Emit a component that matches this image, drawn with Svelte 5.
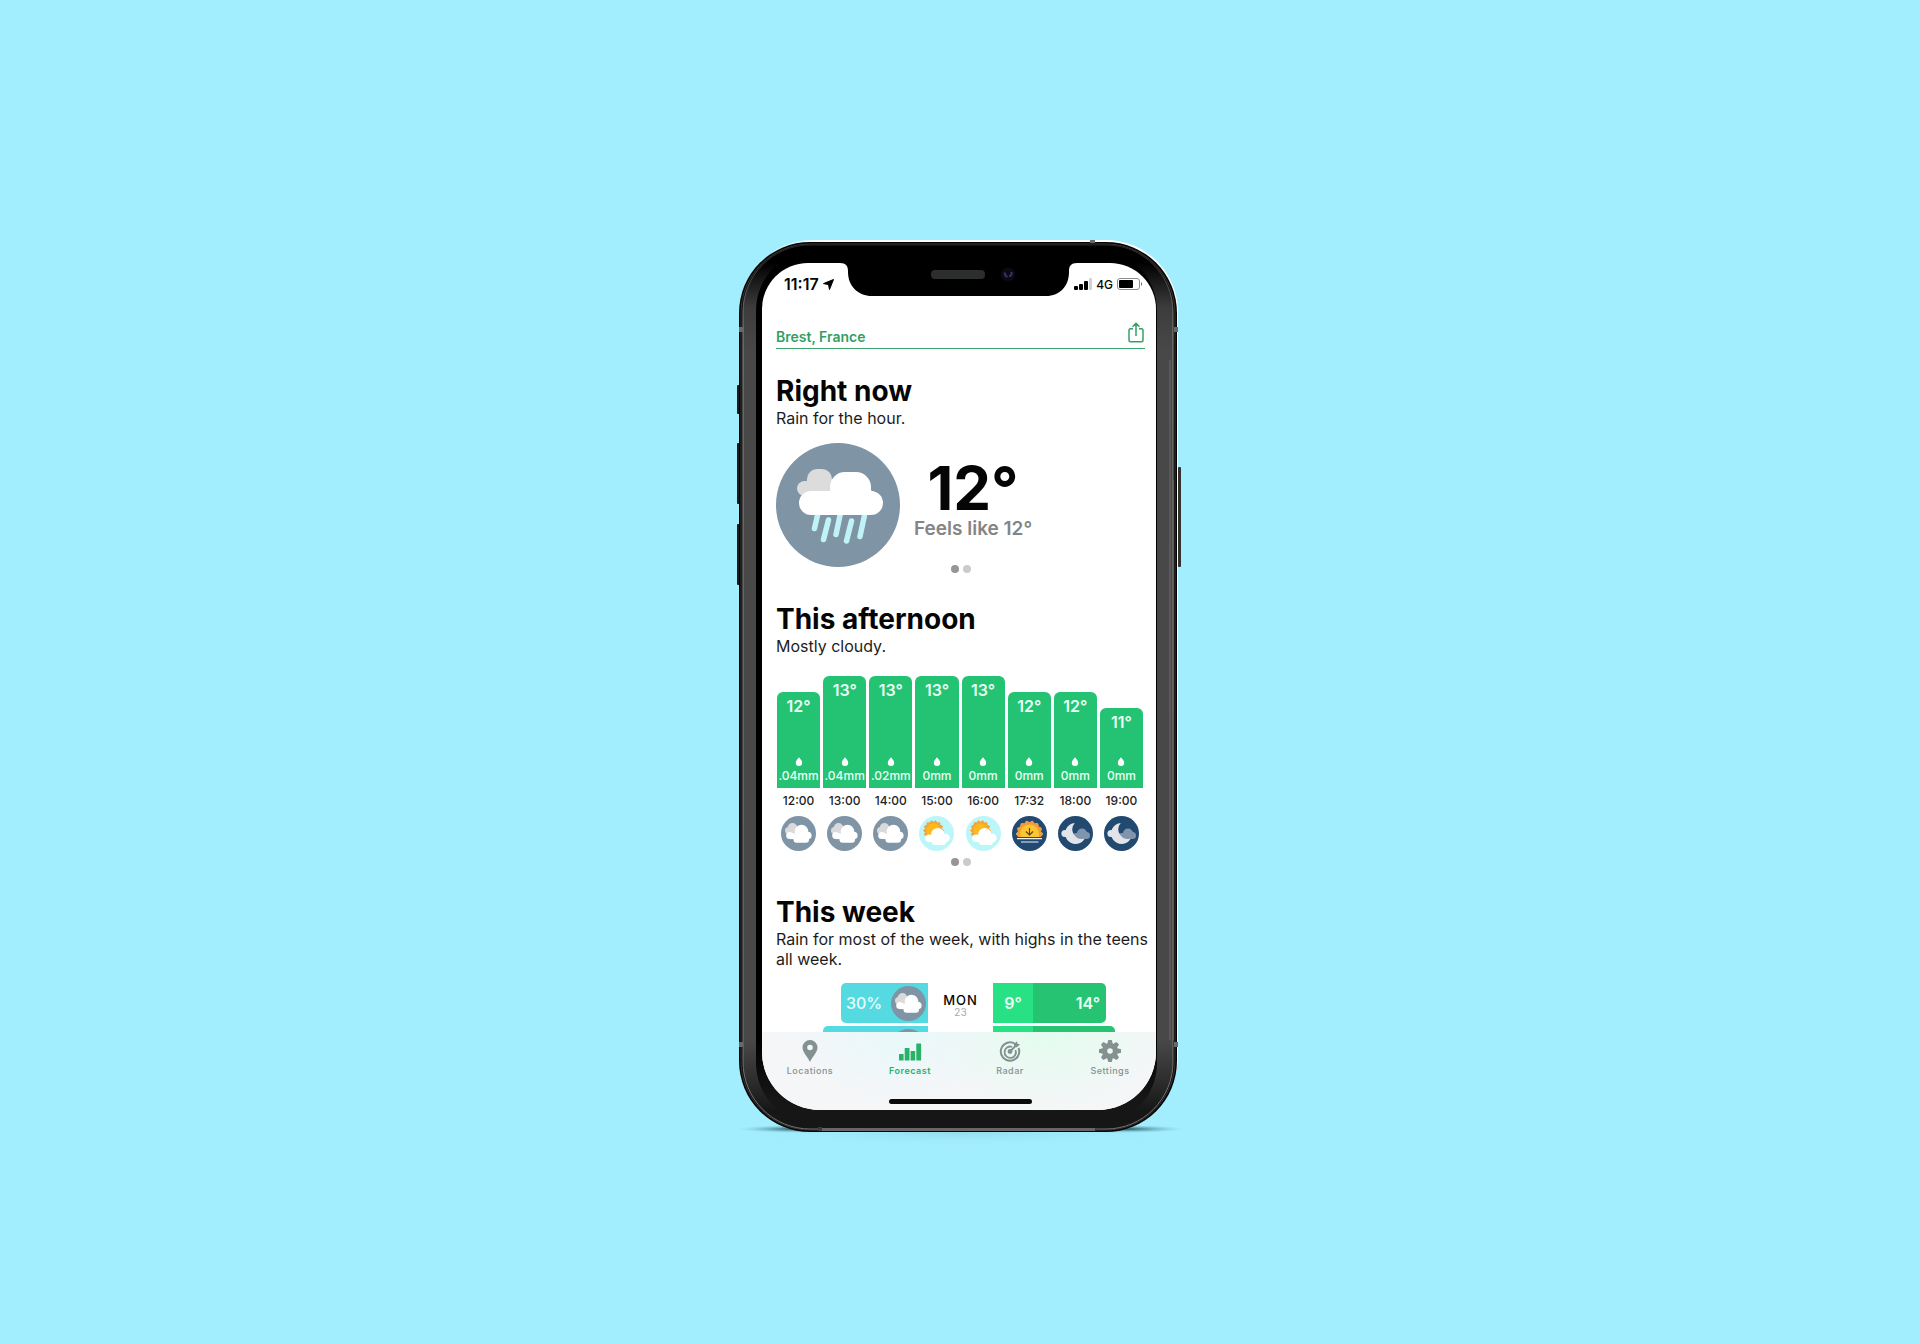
<script>
  const hours = [
    { time: '12:00', temp: 12, rain: '.04mm', icon: 'cloudy' },
    { time: '13:00', temp: 13, rain: '.04mm', icon: 'cloudy' },
    { time: '14:00', temp: 13, rain: '.02mm', icon: 'cloudy' },
    { time: '15:00', temp: 13, rain: '0mm', icon: 'sunny' },
    { time: '16:00', temp: 13, rain: '0mm', icon: 'sunny' },
    { time: '17:32', temp: 12, rain: '0mm', icon: 'sunset' },
    { time: '18:00', temp: 12, rain: '0mm', icon: 'night' },
    { time: '19:00', temp: 11, rain: '0mm', icon: 'night' }
  ];
  const barHeight = (temp) => 96 + (temp - 12) * 16;

  const days = [
    { name: 'MON', date: '23', chance: 30, rainWidth: 87, low: 9, high: 14, tempWidth: 113 },
    { name: 'TUE', date: '24', chance: 60, rainWidth: 105, low: 9, high: 15, tempWidth: 122 }
  ];

  // Rays round a sun, as a star-shaped polygon
  const rays = (cx, cy, inner, outer, count) =>
    Array.from({ length: count * 2 }, (_, i) => {
      const a = (Math.PI * i) / count;
      const r = i % 2 ? inner : outer;
      return `${(cx + r * Math.cos(a)).toFixed(2)},${(cy + r * Math.sin(a)).toFixed(2)}`;
    }).join(' ');
</script>

{#snippet dots()}
  <div class="dots"><span class="on"></span><span></span></div>
{/snippet}

{#snippet weather(kind)}
  <svg class="weather" viewBox="0 0 35 35" aria-hidden="true">
    {#if kind === 'cloudy'}
      <circle cx="17.5" cy="17.5" r="17.5" fill="#7f94a5" />
      <g fill="#dadadc">
        <circle cx="11.5" cy="11.8" r="4.800" /><circle cx="7.600" cy="14.500" r="3.6" />
        <rect x="5" y="13" width="12" height="5" rx="2" />
      </g>
      <g fill="#fff">
        <circle cx="20.5" cy="15.500" r="6.800" /><circle cx="8.800" cy="19.5" r="3.6" />
        <circle cx="26.800" cy="19.5" r="3.800" />
        <rect x="9" y="17.5" width="18" height="5.600" />
        <rect x="12.500" y="18" width="15.500" height="8.700" rx="3" />
      </g>
    {:else if kind === 'sunny'}
      <circle cx="17.5" cy="17.5" r="17.5" fill="#bdf6f9" />
      <polygon points={rays(14.5, 14.5, 8.300, 10, 14)} fill="#f2a43a" stroke="#f2a43a" stroke-linejoin="round" />
      <circle cx="14.5" cy="14.5" r="7.200" fill="#fdb81c" />
      <g fill="#fff">
        <circle cx="18.7" cy="18.5" r="6.600" /><circle cx="10" cy="22.3" r="3.8" />
        <circle cx="26.500" cy="22" r="4.2" />
        <rect x="10" y="20.5" width="17" height="5.600" />
        <rect x="13" y="21" width="14" height="8" rx="3" />
      </g>
    {:else if kind === 'sunset'}
      <circle cx="17.5" cy="17.5" r="17.5" fill="#224a70" />
      <clipPath id="horizon"><rect width="35" height="21" /></clipPath>
      <g clip-path="url(#horizon)">
        <polygon points={rays(17.5, 18, 11.5, 13.3, 14)} fill="#f29d3c" stroke="#f29d3c" stroke-linejoin="round" />
        <circle cx="17.5" cy="18" r="9.500" fill="#fdc62e" />
      </g>
      <path d="M17.5 12v7M14 15.500l3.500 3.500L21 15.500" fill="none" stroke="#4d4420" stroke-width="1.1" />
      <path d="M5 22.700h25M9 26h17.500" stroke="#e9f1f6" stroke-width="1.200" />
    {:else}
      <circle cx="17.5" cy="17.5" r="17.5" fill="#224a70" />
      <g fill="#8094ad">
        <circle cx="24" cy="17.5" r="5" /><circle cx="28.500" cy="19.500" r="3.5" />
        <rect x="15" y="17" width="14" height="6" rx="3" />
      </g>
      <g fill="#e1e4e9">
        <circle cx="7" cy="17.500" r="3.600" />
        <path d="M16.800 7A10.500 10.500 0 1 0 26.800 22.500 9.600 9.600 0 0 1 16.800 7z" />
      </g>
    {/if}
  </svg>
{/snippet}

<main>
  <div class="phone">
    <svg class="frame" viewBox="0 0 439 892" aria-hidden="true">
      <defs>
        <linearGradient id="rim" x1="0" x2="1" y1="0" y2="0">
          <stop offset="0" stop-color="#fff" stop-opacity="0.100" />
          <stop offset="0.200" stop-color="#fff" />
          <stop offset="1" stop-color="#fff" />
        </linearGradient>
        <linearGradient id="band" x1="0" x2="0" y1="0" y2="1">
          <stop offset="0.020" stop-color="#000" />
          <stop offset="0.070" stop-color="#3c3c3c" />
          <stop offset="0.120" stop-color="#484848" />
          <stop offset="0.900" stop-color="#484848" />
          <stop offset="0.950" stop-color="#2a2a2a" />
          <stop offset="0.980" stop-color="#161616" />
        </linearGradient>
        <linearGradient id="edge" x1="0" x2="0" y1="0" y2="1">
          <stop offset="0" stop-color="#222" />
          <stop offset="0.100" stop-color="#8a8a8a" />
          <stop offset="0.880" stop-color="#777" />
          <stop offset="1" stop-color="#777272" />
        </linearGradient>
        <linearGradient id="glass" x1="0" x2="0" y1="0" y2="1">
          <stop offset="0.900" stop-color="#000" />
          <stop offset="0.970" stop-color="#161616" />
        </linearGradient>
        <radialGradient id="shade">
          <stop offset="0" stop-color="#12343c" stop-opacity="0.900" />
          <stop offset="0.500" stop-color="#2b6a78" stop-opacity="0.400" />
          <stop offset="1" stop-color="#6fb5c6" stop-opacity="0" />
        </radialGradient>
      </defs>
      <ellipse cx="60" cy="889" rx="62" ry="4" fill="url(#shade)" />
      <ellipse cx="384" cy="889" rx="62" ry="4" fill="url(#shade)" />
      <ellipse cx="219" cy="893" rx="220" ry="12" fill="url(#shade)" opacity="0.100" />
      <g fill="#1c1a1a">
        <rect x="-2" y="145" width="5" height="29" rx="1" />
        <rect x="-2" y="203" width="5" height="61" rx="1" />
        <rect x="-2" y="284" width="5" height="61" rx="1" />
      </g>
      <rect x="439" y="227" width="3" height="100" rx="1" fill="#35322f" />
      <rect x="1" y="0" width="438" height="888" rx="72" fill="url(#rim)" />
      <rect x="0" y="2" width="438" height="890" rx="71" fill="#060606" />
      <rect x="2" y="4" width="434" height="886" rx="69" fill="none" stroke="#3a3838" stroke-width="1" />
      <rect x="4" y="5" width="430" height="884" rx="67" fill="url(#band)" stroke="url(#edge)" stroke-width="1" />
      <path d="M434 240V800M431 120V800" stroke="#6d6a66" stroke-width="1" />
      <rect x="17" y="9" width="401" height="876" rx="62" fill="url(#glass)" />
      <path d="M82 889.500h274" stroke="#6b6666" stroke-width="3" />
      <g fill="#66686a">
        <rect x="351" y="0" width="5" height="3" />
        <rect x="0" y="87" width="4" height="5" /><rect x="435" y="87" width="4" height="5" />
        <rect x="0" y="802" width="4" height="5" /><rect x="435" y="802" width="4" height="5" />
      </g>
      <rect x="79" y="887" width="4" height="4" fill="#3e3c3c" />
    </svg>

    <div class="screen">
      <svg class="notch" viewBox="0 0 237 33" aria-hidden="true">
        <path d="M0 0h237c-6 0-8 3-8 8v1c0 14-9 24-23 24H32C18 33 8 23 8 9V8c0-5-2-8-8-8z" fill="#000" />
        <rect x="91" y="7" width="54" height="9" rx="4" fill="#2c2e2d" />
        <circle cx="168" cy="11.500" r="7" fill="#0b0a14" />
        <path d="M164.500 9.500c.5 3 1.500 4 3 4.500M169 13c2 0 3-1.500 2.500-4" fill="none" stroke="#37326a" stroke-width="2" />
      </svg>

      <div class="status">
        <span class="clock">11:17</span>
        <svg class="arrow" viewBox="0 0 11 11" aria-hidden="true"><path d="M10.500.5 6.500 10.500 5.500 5.600.5 4.600z" fill="#000" stroke="#000" stroke-linejoin="round" /></svg>
        <svg class="signal" viewBox="0 0 18 12" aria-hidden="true">
          <rect x="0" y="8" width="4" height="4" rx="1" /><rect x="5" y="6" width="4" height="6" rx="1" />
          <rect x="10" y="3" width="4" height="9" rx="1" /><rect x="15" y="0" width="3" height="12" rx="1" fill="#d2d2d2" />
        </svg>
        <span class="net">4G</span>
        <svg class="battery" viewBox="0 0 26 12" aria-hidden="true">
          <rect x="0.500" y="0.500" width="22" height="11" rx="2.500" fill="none" stroke="#8e8e8e" />
          <rect x="2" y="2" width="14" height="8" rx="1" /><path d="M24 4c1.500.5 1.500 3.500 0 4z" fill="#777" />
        </svg>
      </div>

      <header>
        <h1>Brest, France</h1>
        <button class="share" aria-label="Share">
          <svg viewBox="0 0 16 21" aria-hidden="true">
            <path d="M5 6.800H2.500a1.500 1.500 0 0 0-1.500 1.500v10A1.500 1.500 0 0 0 2.500 19.800h11a1.500 1.500 0 0 0 1.500-1.500v-10A1.500 1.500 0 0 0 13.500 6.800H11M8 14V1.500M4.500 4.800 8 1.300l3.500 3.500" fill="none" stroke="#35a067" stroke-width="1.500" />
          </svg>
        </button>
      </header>

      <section>
        <h2>Right now</h2>
        <p>Rain for the hour.</p>
        <div class="now">
          <svg class="rain" viewBox="0 0 124 124" aria-hidden="true">
            <circle cx="62" cy="62" r="62" fill="#7f94a5" />
            <g fill="#dcdcdd">
              <rect x="31" y="26" width="25" height="26" rx="10" /><rect x="21" y="38" width="30" height="15" rx="7.500" />
            </g>
            <g stroke="#c0f3f6" stroke-width="5.500" stroke-linecap="round">
              <path d="M42 70 38.500 85.500M52.500 77 47.500 96.500M64.500 70 60 91.500M75.500 78 70.500 98M89 70 84 93.500" />
            </g>
            <g fill="#fff">
              <rect x="23" y="48" width="84" height="24" rx="12" />
              <rect x="54" y="29" width="41" height="36" rx="15" />
              <path d="M94 44c0 3 1 4 4 4.200l-4 3z" />
            </g>
          </svg>
          <div class="reading">
            <strong>12°</strong>
            <span>Feels like 12°</span>
          </div>
        </div>
        {@render dots()}
      </section>

      <section>
        <h2>This afternoon</h2>
        <p>Mostly cloudy.</p>
        <ol class="hours">
          {#each hours as hour}
            <li>
              <div class="slot">
                <div class="bar" style="height: {barHeight(hour.temp)}px">
                  <b>{hour.temp}°</b>
                  <svg viewBox="0 0 8 9" aria-hidden="true"><path d="M4 .3C5.500 2.300 7.200 4 7.200 5.700a3.200 3.200 0 0 1-6.400 0C.8 4 2.500 2.300 4 .3z" fill="#fff" /></svg>
                  <small>{hour.rain}</small>
                </div>
              </div>
              <time>{hour.time}</time>
              {@render weather(hour.icon)}
            </li>
          {/each}
        </ol>
        {@render dots()}
      </section>

      <section class="week">
        <h2>This week</h2>
        <p>Rain for most of the week, with highs in the teens all week.</p>
        <ol class="days">
          {#each days as day}
            <li>
              <div class="chance" style="width: {day.rainWidth}px">
                <span>{day.chance}%</span>{@render weather('cloudy')}
              </div>
              <div class="day"><b>{day.name}</b><small>{day.date}</small></div>
              <div class="range" style="width: {day.tempWidth}px">
                <span class="low">{day.low}°</span><span class="high">{day.high}°</span>
              </div>
            </li>
          {/each}
        </ol>
      </section>

      <nav>
        <div class="tabs">
          <button>
            <svg viewBox="0 0 24 24" aria-hidden="true"><path d="M12 1a7.500 7.500 0 0 0-7.500 7.500C4.500 13 9 17 12 23c3-6 7.500-10 7.500-14.500A7.500 7.500 0 0 0 12 1zm0 4.700a2.800 2.800 0 1 1 0 5.600 2.800 2.800 0 0 1 0-5.600z" fill="currentColor" fill-rule="evenodd" /></svg>
            Locations
          </button>
          <button class="active" aria-current="page">
            <svg viewBox="0 0 24 24" aria-hidden="true"><g fill="currentColor"><rect x="1" y="15" width="4.600" height="6.500" rx=".6" /><rect x="6.700" y="9" width="4.800" height="12.500" rx=".6" /><rect x="12.600" y="12" width="4.600" height="9.500" rx=".6" /><rect x="18.300" y="4.500" width="4.800" height="17" rx=".6" /></g></svg>
            Forecast
          </button>
          <button>
            <svg viewBox="0 0 24 24" aria-hidden="true">
              <g fill="none" stroke="currentColor">
                <path d="M17 4.800A9.200 9.200 0 1 0 20.500 9" stroke-width="2" />
                <path d="M14 7.800A5.700 5.700 0 1 0 17.500 11" stroke-width="1.800" />
                <path d="M12 12.500 18 6.500" stroke-width="2" />
              </g>
              <circle cx="12" cy="12.500" r="2.400" fill="currentColor" />
              <path d="M16 5 19 2.200l.5 2.500 2.500.6-3 3-3-.5z" fill="currentColor" />
            </svg>
            Radar
          </button>
          <button>
            <svg viewBox="0 0 24 24" aria-hidden="true">
              <g fill="currentColor">
                {#each [0, 45, 90, 135, 180, 225, 270, 315] as angle}
                  <path d="M9 5.500 10.300 1h3.400l1.300 4.500z" transform="rotate({angle} 12 12)" />
                {/each}
                <path d="M12 4.300a7.700 7.700 0 1 0 0 15.400 7.700 7.700 0 0 0 0-15.400zm0 4.900a2.800 2.800 0 1 1 0 5.600 2.800 2.800 0 0 1 0-5.600z" fill-rule="evenodd" />
              </g>
            </svg>
            Settings
          </button>
        </div>
        <div class="home"></div>
      </nav>
    </div>
  </div>
</main>

<style>
  :global(body) {
    margin: 0;
    background: #a2eeff;
  }
  * {
    box-sizing: border-box;
  }
  main {
    display: flex;
    align-items: center;
    justify-content: center;
    min-height: 100vh;
    padding: 28px 3px 0 0;
    font-family: Inter, 'Liberation Sans', sans-serif;
    color: #050505;
  }
  .phone {
    position: relative;
    width: 439px;
    max-width: 100%;
    padding: 23px 22px 22px 23px;
  }
  .frame {
    position: absolute;
    inset: 0;
    width: 100%;
    height: 100%;
    overflow: visible;
  }
  .screen {
    position: relative;
    display: flex;
    flex-direction: column;
    height: 847px;
    padding: 0 11px 0 14px;
    overflow: hidden;
    border-radius: 46px 46px 58px 58px;
    background: #fff;
  }
  .notch {
    position: absolute;
    top: 0;
    left: 78px;
    width: 237px;
    height: 33px;
  }
  .status {
    display: flex;
    flex: none;
    align-items: center;
    height: 42px;
    padding: 0 2px 0 8px;
  }
  .clock {
    font-size: 16px;
    font-weight: 600;
    line-height: 20px;
  }
  .arrow {
    width: 11px;
    height: 11px;
    margin: 0 auto 0 4px;
  }
  .signal {
    width: 18px;
    height: 12px;
  }
  .net {
    margin: 0 4px;
    font-size: 12px;
    font-weight: 500;
  }
  .battery {
    width: 26px;
    height: 12px;
  }
  header {
    display: flex;
    flex: none;
    align-items: flex-end;
    justify-content: space-between;
    height: 44px;
    padding-bottom: 1px;
    border-bottom: 1px solid #3da46e;
  }
  h1 {
    margin: 0;
    font-size: 14px;
    font-weight: 600;
    line-height: 20px;
    color: #2f9f65;
  }
  button {
    padding: 0;
    border: 0;
    background: none;
    font: inherit;
    cursor: pointer;
  }
  .share {
    display: flex;
    padding: 0 1px 4px 0;
  }
  .share svg {
    width: 16px;
    height: 21px;
  }
  section {
    flex: none;
    margin-top: 30px;
  }
  header + section {
    margin-top: 26px;
  }
  h2 {
    margin: 0 0 1px;
    font-size: 28px;
    font-weight: 700;
    line-height: 32px;
  }
  p {
    margin: 0 -6px 0 0;
    font-size: 16px;
    line-height: 20px;
    color: #1c1c1c;
  }
  .now {
    display: flex;
    gap: 14px;
    height: 124px;
    margin: 15px 0 -2px;
  }
  .rain {
    width: 124px;
    height: 124px;
  }
  .reading {
    display: flex;
    flex-direction: column;
    align-items: center;
    padding-top: 12px;
  }
  .reading strong {
    font-size: 60px;
    line-height: 66px;
  }
  .reading span {
    font-size: 19px;
    font-weight: 600;
    line-height: 16px;
    color: #858585;
  }
  .dots {
    display: flex;
    justify-content: center;
    gap: 4px;
  }
  .dots span {
    width: 8px;
    height: 8px;
    border-radius: 50%;
    background: #cbcbcb;
  }
  .dots .on {
    background: #969696;
  }
  ol {
    margin: 0;
    padding: 0;
    list-style: none;
  }
  .hours {
    display: grid;
    grid-template-columns: repeat(8, 1fr);
    gap: 3px;
    margin: 20px 2px 7px 1px;
  }
  .hours li {
    display: flex;
    flex-direction: column;
    align-items: center;
  }
  .slot {
    display: flex;
    align-items: flex-end;
    width: 100%;
    height: 112px;
  }
  .bar {
    display: flex;
    flex-direction: column;
    align-items: center;
    width: 100%;
    padding: 4px 0;
    border-radius: 6px 6px 0 0;
    background: #24c373;
    color: #e9fff3;
  }
  .bar b {
    margin-bottom: auto;
    font-size: 16px;
    font-weight: 600;
    line-height: 20px;
  }
  .bar svg {
    width: 8px;
    height: 9px;
  }
  .bar small {
    font-size: 12px;
    font-weight: 500;
    line-height: 16px;
    margin-top: 2px;
  }
  time {
    margin: 5px 0 7px;
    font-size: 12px;
    font-weight: 500;
    line-height: 16px;
    color: #222;
  }
  .weather {
    flex: none;
    width: 35px;
    height: 35px;
  }
  .days {
    display: grid;
    gap: 3px;
    margin: 14px 0 0;
  }
  .days li {
    display: grid;
    grid-template-columns: 1fr 65px 1fr;
    height: 40px;
  }
  .days li > div {
    display: flex;
    align-items: center;
  }
  .days .chance {
    justify-content: space-between;
    justify-self: end;
    padding: 0 2px 0 5px;
    border-radius: 5px 0 0 5px;
    background: #54dae0;
    font-size: 16px;
    font-weight: 500;
    color: #e8fdff;
  }
  .days .day {
    flex-direction: column;
    justify-content: center;
    padding-top: 4px;
  }
  .day b {
    font-size: 13px;
    font-weight: 500;
    line-height: 14px;
    letter-spacing: 1px;
  }
  .day small {
    font-size: 10px;
    line-height: 10px;
    color: #aaa;
  }
  .range {
    overflow: hidden;
    border-radius: 0 5px 5px 0;
    background: #26c372;
    font-size: 16px;
    font-weight: 600;
    line-height: 40px;
    color: #e9fff3;
  }
  .low {
    width: 40px;
    background: #27e184;
    text-align: center;
  }
  .high {
    flex: 1;
    padding-right: 6px;
    text-align: right;
  }
  nav {
    position: absolute;
    inset: auto 0 0;
    height: 78px;
    padding: 7px 0 0 2px;
    background:
      radial-gradient(ellipse 110px 70px at 34% 0, #e8f9fa, transparent),
      radial-gradient(ellipse 120px 80px at 72% 0, #e2fcee, transparent),
      #f5f6f8;
  }
  .tabs {
    display: grid;
    grid-template-columns: repeat(4, 100px);
    justify-content: center;
  }
  .tabs button {
    display: flex;
    flex-direction: column;
    align-items: center;
    font-size: 9px;
    font-weight: 500;
    line-height: 12px;
    letter-spacing: 0.5px;
    color: #839290;
  }
  .tabs svg {
    width: 24px;
    height: 24px;
    margin-bottom: 2px;
  }
  .tabs .active {
    font-weight: 600;
    color: #27b268;
  }
  .home {
    width: 143px;
    height: 5px;
    margin: 22px auto 0;
    border-radius: 3px;
    background: #0a0a0a;
  }
</style>
